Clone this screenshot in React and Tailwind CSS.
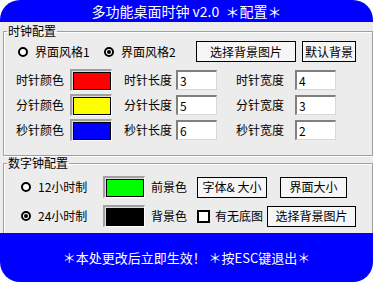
function Radio({ checked, label, className }) {
  return (
    <div className={`flex items-center ${className}`}>
      <span className="flex h-[10px] w-[10px] items-center justify-center rounded-full border-2 border-black bg-white">
        {checked ? <span className="h-[4px] w-[4px] rounded-full bg-black" /> : null}
      </span>
      <span className="ml-[7px]">{label}</span>
    </div>
  );
}

function Swatch({ color }) {
  return (
    <div className="h-[22px] w-[42px] shrink-0 border-t-2 border-l-2 border-r border-b border-t-[#a0a0a0] border-l-[#a0a0a0] border-r-white border-b-white bg-[#dedede] pt-px pl-px">
      <div className={`h-full w-full border border-black ${color}`} />
    </div>
  );
}

function Field({ value }) {
  return (
    <div className="flex h-[20px] w-[41px] shrink-0 items-center border-t-2 border-l-2 border-r border-b border-t-[#808080] border-l-[#808080] border-r-[#d8d8d8] border-b-[#d8d8d8] bg-white pl-[2px]">
      {value}
    </div>
  );
}

function Btn({ children, className }) {
  return (
    <div className={`flex h-[21px] shrink-0 items-center justify-center border border-black bg-[#f6f6f6] ${className}`}>
      {children}
    </div>
  );
}

const hands = [
  { name: "时针", color: "bg-[#ff0000]", len: "3", width: "4" },
  { name: "分针", color: "bg-[#ffff00]", len: "5", width: "3" },
  { name: "秒针", color: "bg-[#0000ff]", len: "6", width: "2" },
];

export default function App() {
  return (
    <div className="flex h-[282px] w-[373px] flex-col bg-white font-['Noto_Sans_CJK_SC',sans-serif] text-[12px] text-black">
      <div className="flex h-[22px] items-center justify-center whitespace-pre rounded-t-[20px] bg-[#0000ff] text-[14px] leading-none text-white">
        多功能桌面时钟 v2.0  ＊配置＊
      </div>

      <div className="h-[211px] bg-[#ececec] pt-[2px]">
        <fieldset className="ml-[3px] h-[132px] w-[370px] border border-[#a0a0a0] shadow-[inset_1px_1px_0_#fff,1px_1px_0_#fff]">
          <legend className="ml-[3px] px-[1px] leading-[14px]">时钟配置</legend>
          <div className="mt-[3px] flex h-[21px] items-center pl-[14px]">
            <Radio label="界面风格1" className="w-[86px]" />
            <Radio checked label="界面风格2" className="w-[92px]" />
            <Btn className="w-[100px]">选择背景图片</Btn>
            <Btn className="ml-[6px] w-[54px]">默认背景</Btn>
          </div>
          <div className="mt-[7px] flex flex-col gap-[3px]">
            {hands.map((h) => (
              <div key={h.name} className="flex h-[22px] items-center pl-[12px]">
                <span className="w-[54px]">{h.name}颜色</span>
                <Swatch color={h.color} />
                <span className="ml-[12px] w-[52px]">{h.name}长度</span>
                <Field value={h.len} />
                <span className="ml-[19px] w-[59px]">{h.name}宽度</span>
                <Field value={h.width} />
              </div>
            ))}
          </div>
        </fieldset>

        <fieldset className="ml-[3px] h-[80px] w-[370px] border border-b-0 border-[#a0a0a0] shadow-[inset_1px_1px_0_#fff,1px_0_0_#fff]">
          <legend className="ml-[3px] px-[1px] leading-[14px]">数字钟配置</legend>
          <div className="mt-[6px] flex flex-col gap-[7px]">
            <div className="flex h-[22px] items-center pl-[17px]">
              <Radio label="12小时制" className="w-[82px]" />
              <Swatch color="bg-[#00ff00]" />
              <span className="ml-[6px] w-[46px]">前景色</span>
              <Btn className="h-[20px] w-[70px]">字体&amp; 大小</Btn>
              <Btn className="ml-[13px] h-[20px] w-[67px]">界面大小</Btn>
            </div>
            <div className="flex h-[22px] items-center pl-[17px]">
              <Radio checked label="24小时制" className="w-[82px]" />
              <Swatch color="bg-black" />
              <span className="ml-[6px] w-[46px]">背景色</span>
              <div className="flex w-[70px] items-center">
                <span className="h-[13px] w-[13px] border-2 border-black bg-white" />
                <span className="ml-[5px]">有无底图</span>
              </div>
              <Btn className="h-[20px] w-[89px]">选择背景图片</Btn>
            </div>
          </div>
        </fieldset>
      </div>

      <div className="flex flex-1 items-center justify-center rounded-b-[20px] bg-[#0000ff] pb-px text-[13px] leading-none text-white">
        ＊本处更改后立即生效！ ＊按ESC键退出＊
      </div>
    </div>
  );
}
